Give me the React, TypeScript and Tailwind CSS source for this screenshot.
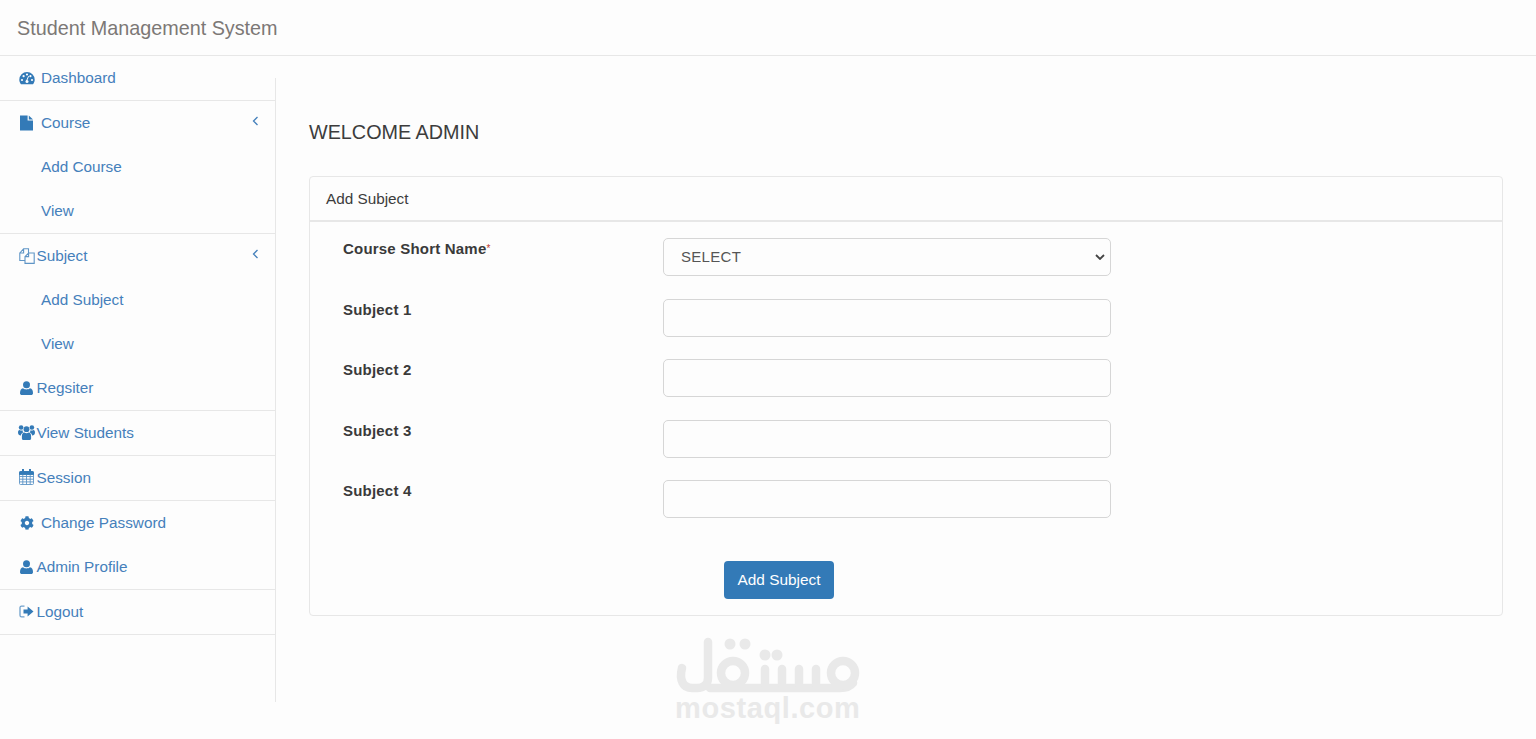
import React from "react"
import { FaCog } from "react-icons/fa"

type NavRow = {
    label: string
    icon?: React.ReactNode
    wideGap?: boolean
    child?: boolean
    caret?: boolean
    border?: boolean
    height: string
}

const IconBox = ({ children, w = 16, h = 16, className = "" }: { children: React.ReactNode; w?: number; h?: number; className?: string }) => (
    <svg viewBox={`0 0 ${w} ${h}`} width={w} height={h} className={`shrink-0 text-[#337ab7] ${className}`} fill="currentColor">
        {children}
    </svg>
)

const GaugeIcon = () => (
    <IconBox h={14}>
        <path d="M2 13.2C.9 11.9.3 10.5.3 8.8a7.7 7.7 0 0 1 15.4 0c0 1.7-.6 3.1-1.7 4.4Z" />
        <g fill="#fdfdfd">
            <circle cx="3" cy="9" r="1.1" />
            <circle cx="4.6" cy="5.2" r="1.1" />
            <circle cx="8" cy="3.5" r="1.1" />
            <circle cx="11.4" cy="5.2" r="1.1" />
            <circle cx="13" cy="9" r="1.1" />
            <circle cx="8" cy="10.4" r="1.5" />
        </g>
        <path d="M7.5 10 9.6 5.2" stroke="#fdfdfd" strokeWidth="1" />
    </IconBox>
)

const FileIcon = () => (
    <IconBox w={13} h={16}>
        <path d="M0 .5h7.6v5H13V15.5H0Z" />
        <path d="M8.8.5 13 4.4H8.8Z" />
    </IconBox>
)

const FilesIcon = () => (
    <svg viewBox="0 0 16 16" width="16" height="16" className="shrink-0 text-[#5f95c6]" fill="none" stroke="currentColor" strokeWidth="1.1">
        <path d="M.8 5 4.6.8H9.5V5M4.6.8V5H.8v7.5H6" />
        <path d="M6 8.6 9.6 5H15.2V15.4H6ZM9.6 5V8.6H6" />
    </svg>
)

const UserIcon = () => (
    <IconBox w={13} h={14}>
        <circle cx="6.5" cy="3.7" r="3.5" />
        <path d="M0 12.2C0 9.4 1 7.4 3 7.2c.9.8 2.2 1.2 3.5 1.2S9.1 8 10 7.2c2 .2 3 2.2 3 5 0 1.1-.8 1.8-1.9 1.8H1.900C.8 14 0 13.3 0 12.2Z" />
    </IconBox>
)

const UsersIcon = () => (
    <IconBox w={17} h={15}>
        <circle cx="8.5" cy="4.2" r="2.9" />
        <circle cx="3.1" cy="2.5" r="2.3" />
        <circle cx="13.9" cy="2.5" r="2.3" />
        <path d="M3.9 13.5V11c0-2 1-3.4 2.4-3.4 1.3 1 3.1 1 4.4 0 1.4 0 2.4 1.4 2.4 3.4v2.5c0 .9-.6 1.5-1.5 1.5H5.4c-.9 0-1.5-.6-1.5-1.5Z" />
        <path d="M0 7.5C0 6 .6 5 1.6 5c.9.7 2 .8 3 .3-.1 1.1.4 1.9 1 2.3C4.100 7.900 3.100 9 2.900 10.500 1.200 10.500 0 9.600 0 7.500Z" />
        <path d="M17 7.500C17 6 16.400 5 15.400 5c-.9.7-2 .8-3 .3.100 1.100-.4 1.900-1 2.300 1.500.3 2.500 1.400 2.700 2.900 1.700 0 2.900-.9 2.900-3Z" />
    </IconBox>
)

const CalendarIcon = () => (
    <svg viewBox="0 0 15 16" width="15" height="16" className="shrink-0 text-[#5f95c6]" fill="none" stroke="currentColor" strokeWidth="0.9">
        <rect x=".5" y="2.5" width="14" height="13" rx="1" />
        <path d="M.5 7.500h14M.5 10.200h14M.5 12.900h14M3.800 6v9.500M7.500 6v9.500M11.200 6v9.500" />
        <path d="M.5 5.500h14V3.500a1 1 0 0 0-1-1h-12a1 1 0 0 0-1 1Z" fill="#337ab7" stroke="#337ab7" />
        <path d="M4 .5v3M11 .5v3" stroke="#337ab7" strokeWidth="2" strokeLinecap="round" />
    </svg>
)

const LogoutIcon = () => (
    <svg viewBox="0 0 15 13" width="15" height="13" className="shrink-0 text-[#337ab7]" fill="currentColor">
        <path d="M5.500 1.200H2.500C1.500 1.200 1 1.800 1 2.800v7.400c0 1 .5 1.600 1.500 1.600h3" fill="none" stroke="#6fa0cc" strokeWidth="1.3" />
        <path d="M4.500 4.500H8.600V1.500L14.500 6.500 8.600 11.500V8.500H4.500Z" />
    </svg>
)

const rows: NavRow[] = [
    { label: "Dashboard", icon: <GaugeIcon />, wideGap: true, border: true, height: "h-[45px]" },
    { label: "Course", icon: <FileIcon />, wideGap: true, caret: true, height: "h-[44.2px]" },
    { label: "Add Course", child: true, height: "h-[44.2px]" },
    { label: "View", child: true, border: true, height: "h-[44.6px]" },
    { label: "Subject", icon: <FilesIcon />, caret: true, height: "h-[44.2px]" },
    { label: "Add Subject", child: true, height: "h-[44.2px]" },
    { label: "View", child: true, height: "h-[44.2px]" },
    { label: "Regsiter", icon: <UserIcon />, border: true, height: "h-[44.4px]" },
    { label: "View Students", icon: <UsersIcon />, border: true, height: "h-[45px]" },
    { label: "Session", icon: <CalendarIcon />, border: true, height: "h-[45px]" },
    { label: "Change Password", icon: <FaCog className="h-[14px] w-[14px] shrink-0 text-[#337ab7]" />, wideGap: true, height: "h-[44.5px]" },
    { label: "Admin Profile", icon: <UserIcon />, border: true, height: "h-[44.5px]" },
    { label: "Logout", icon: <LogoutIcon />, border: true, height: "h-[45px]" },
]

const SideRow = ({ row }: { row: NavRow }) => (
    <div
        className={`flex items-center pt-[1px] text-[#4580bb] ${row.height} ${row.border ? "border-b border-[#e7e7e7]" : ""} ${row.child ? "pl-[41px]" : "pl-[18px]"}`}
    >
        {row.icon && (
            <span className={`flex shrink-0 justify-center pb-[2px] ${row.wideGap ? "w-[23px] pr-[6px]" : "w-[18.5px] pr-[1.5px]"}`}>{row.icon}</span>
        )}
        <span>{row.label}</span>
        {row.caret && (
            <svg viewBox="0 0 7 10" width="7" height="10" className="mb-[6px] ml-auto mr-[16px] text-[#4580bb]" fill="none" stroke="currentColor" strokeWidth="1.3">
                <path d="M5.500 1 1.500 5l4 4" />
            </svg>
        )}
    </div>
)

const Watermark = () => (
    <div className="absolute left-[650px] top-[630px] h-[105px] w-[230px] select-none text-[#e9e9e9]">
        <svg viewBox="0 0 230 66" className="h-[66px] w-[230px]" fill="none" stroke="currentColor" strokeWidth="8.5" strokeLinecap="round">
            <path d="M58 12V48C58 54 54 58 47 58H42C33 58 29 50 32 38" />
            <circle cx="83" cy="43" r="12" />
            <path d="M60 58H190C195 58 200 57 203 53" />
            <path d="M115 39V54M132 39V54M149 39V54M166 39V54" />
            <circle cx="193" cy="43" r="12" />
            <g fill="currentColor" stroke="none">
                <circle cx="80" cy="14" r="5.5" />
                <circle cx="95" cy="14" r="5.5" />
                <circle cx="115" cy="25" r="5.5" />
                <circle cx="127" cy="25" r="5.5" />
            </g>
        </svg>
        <div className="ml-[25px] text-[29px] font-bold leading-[24px] tracking-[0.6px]">mostaql.com</div>
    </div>
)

const Field = ({ label, required, select }: { label: string; required?: boolean; select?: boolean }) => (
    <div className="flex">
        <label className="mt-[1px] w-[320px] shrink-0 font-bold leading-[20px] tracking-[0.2px] text-[#3a3a3a]">
            {label}
            {required && <span className="align-top text-[10px] font-normal text-[#c0392b]">*</span>}
        </label>
        {select ? (
            <div className="relative">
                <select className="h-[38px] w-[448px] appearance-none rounded-[5px] border border-[#d6d6d6] bg-[#fdfdfd] pl-[17px] pr-[8px] tracking-[0.3px] text-[#555]">
                    <option>SELECT</option>
                </select>
                <svg viewBox="0 0 10 6" width="10" height="6" className="pointer-events-none absolute right-[6px] top-[16px] text-[#444]" fill="none" stroke="currentColor" strokeWidth="1.8">
                    <path d="M1 1l4 4 4-4" />
                </svg>
            </div>
        ) : (
            <input className="h-[38px] w-[448px] rounded-[5px] border border-[#d6d6d6] bg-[#fdfdfd] px-3" />
        )}
    </div>
)

export default function App() {
    return (
        <div className="relative h-[739px] overflow-hidden bg-[#fdfdfd] text-[15px] [font-family:'Liberation_Sans',Arial,sans-serif]">
            <header className="flex h-[56px] items-center border-b border-[#e7e7e7] pl-[17px] pt-[2px] text-[19.8px] text-[#7c7876]">
                Student Management System
            </header>
            <div className="flex items-start">
                <nav className="w-[275px] shrink-0 text-[15.3px]">
                    {rows.map((row, i) => (
                        <SideRow key={i} row={row} />
                    ))}
                </nav>
                <main className="mt-[22px] h-[624px] flex-1 border-l border-[#e7e7e7] pl-[33px] pr-[33px]">
                    <h1 className="mt-[42px] text-[19.8px] leading-[24px] text-[#3c3c3c]">WELCOME ADMIN</h1>
                    <section className="mt-[32px] h-[440px] rounded-[4px] border border-[#e7e7e7]">
                        <div className="flex h-[45px] items-center border-b-2 border-[#e7e7e7] pl-[16px] pt-[1px] text-[15.3px] text-[#3c3c3c]">Add Subject</div>
                        <form className="pl-[33px] pt-[16px]">
                            <div className="flex flex-col gap-y-[22.5px]">
                                <Field label="Course Short Name" required select />
                                <Field label="Subject 1" />
                                <Field label="Subject 2" />
                                <Field label="Subject 3" />
                                <Field label="Subject 4" />
                            </div>
                            <button type="button" className="ml-[381px] mt-[43px] h-[38px] w-[110px] rounded-[4px] bg-[#337ab7] text-[15.4px] text-white">
                                Add Subject
                            </button>
                        </form>
                    </section>
                </main>
            </div>
            <Watermark />
        </div>
    )
}
